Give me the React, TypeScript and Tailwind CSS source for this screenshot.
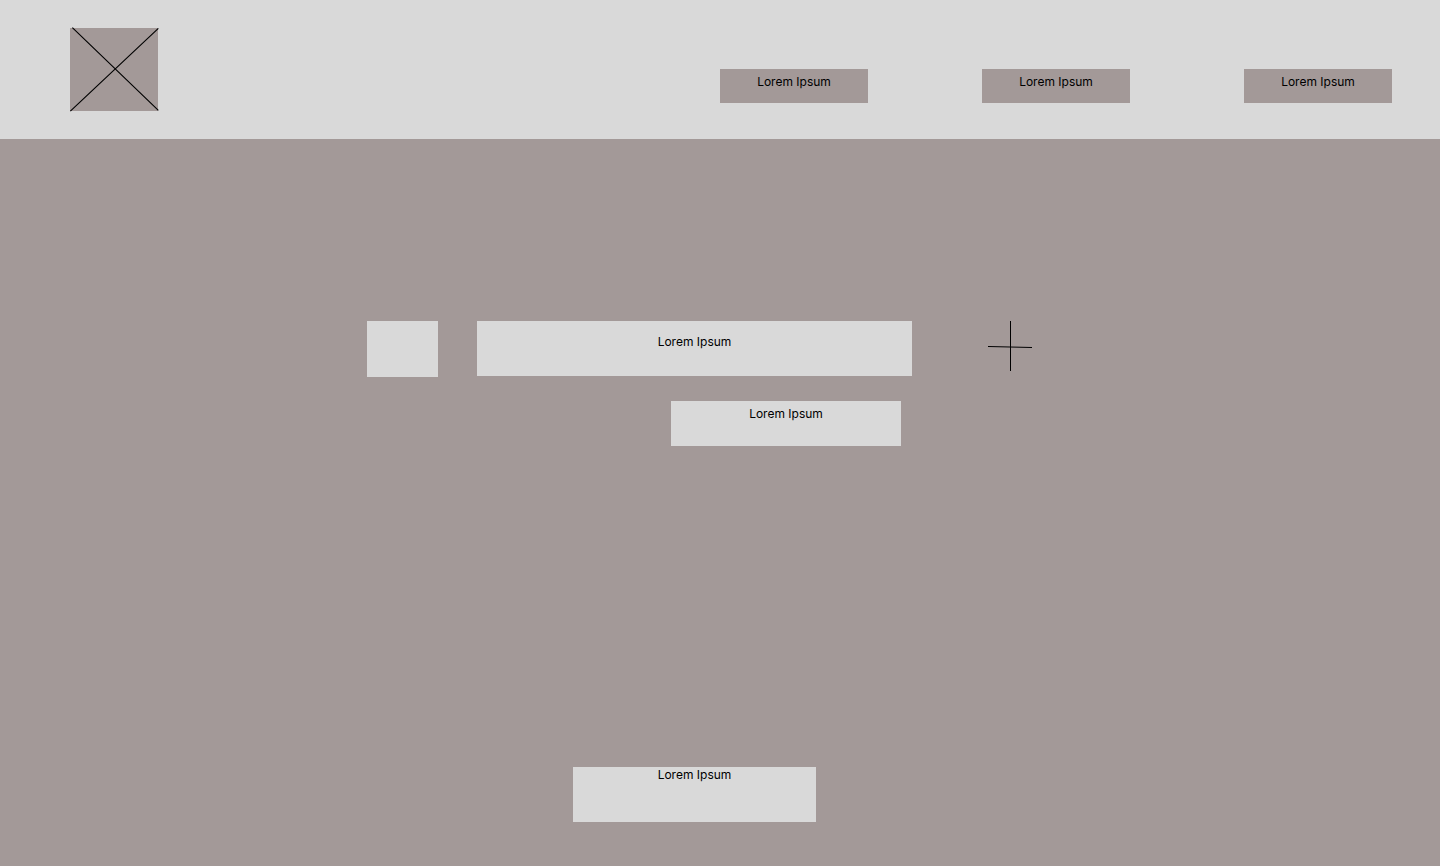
const navItems = [
  { id: 'first', label: 'Lorem Ipsum' },
  { id: 'second', label: 'Lorem Ipsum' },
  { id: 'third', label: 'Lorem Ipsum' },
];

function Logo() {
  return (
    <a href="#home" aria-label="Home" className="block bg-[#a39998]">
      <svg
        width="88"
        height="83"
        viewBox="0 0 88 83"
        fill="none"
        stroke="#000"
        strokeWidth="1.15"
        className="block overflow-visible"
      >
        <path d="M2.35 -0.35 88.35 82.35M0.35 83.15 88.35 0.35" />
      </svg>
    </a>
  );
}

function Header() {
  return (
    <header className="flex items-end justify-between bg-[#d9d9d9] py-7 pr-12 pl-[70px]">
      <Logo />
      <nav aria-label="Main" className="mb-2 flex gap-[114px]">
        {navItems.map((item) => (
          <a
            key={item.id}
            href={`#${item.id}`}
            className="h-[34px] w-[148px] bg-[#a39998] pt-[5px] text-center"
          >
            {item.label}
          </a>
        ))}
      </nav>
    </header>
  );
}

export default function App() {
  return (
    <div className="flex min-h-screen flex-col bg-[#a39998] font-['Inter',sans-serif] text-xs text-black">
      <Header />
      <main className="flex flex-1 flex-col items-center justify-between gap-12 pt-[182px] pr-[51px] pb-11">
        <section className="grid w-full grid-cols-[1fr_435px_1fr] items-start gap-y-6">
          <div className="mr-[39px] h-14 w-[71px] justify-self-end bg-[#d9d9d9]" />
          <p className="h-[55px] bg-[#d9d9d9] pt-[13px] text-center">Lorem Ipsum</p>
          <button type="button" aria-label="Add" className="ml-[76px] justify-self-start">
            <svg width="44" height="50" viewBox="0 0 44 50" fill="none" stroke="#000" className="block">
              <path d="M22.5 0V50M0 25.5 44 26.5" />
            </svg>
          </button>
          <button
            type="button"
            className="col-start-2 mr-[11px] flex h-[45px] w-[230px] items-start justify-center justify-self-end bg-[#d9d9d9] pt-[5px]"
          >
            Lorem Ipsum
          </button>
        </section>
        <button type="button" className="flex h-[55px] w-[243px] items-start justify-center bg-[#d9d9d9]">
          Lorem Ipsum
        </button>
      </main>
    </div>
  );
}
